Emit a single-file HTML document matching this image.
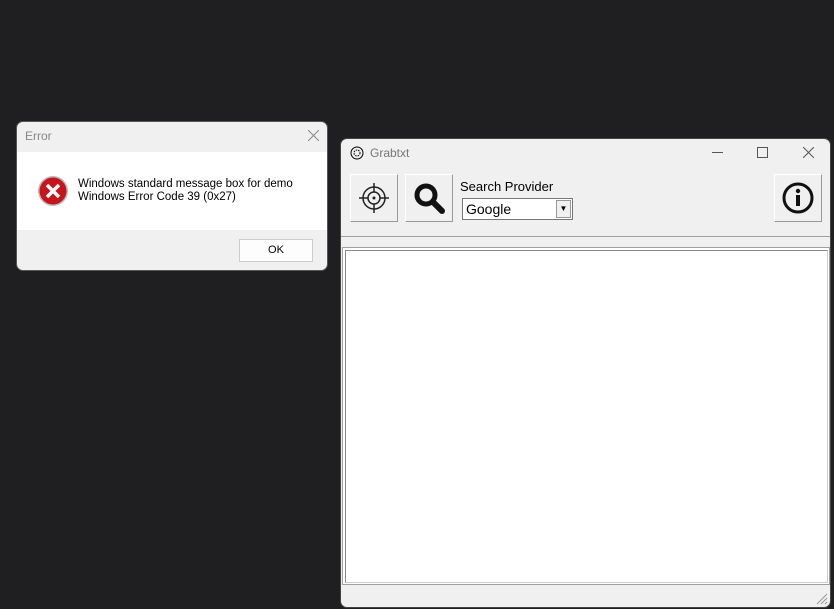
<!DOCTYPE html>
<html><head><style>
body{margin:0;width:834px;height:609px;background:#1f1f21;position:relative;overflow:hidden;font-family:"Liberation Sans",sans-serif}
.abs{position:absolute}
</style></head><body>
<!-- Error dialog -->
<div class="abs" style="left:16px;top:121px;width:312px;height:150px;background:#f0f0f0;border-radius:7px;overflow:hidden;border:1px solid #555;box-sizing:border-box">
  <div class="abs" style="left:8px;top:7px;font-size:12px;color:#888">Error</div>
  <svg class="abs" style="left:291px;top:8px" width="11" height="11"><path d="M0 0L11 11M11 0L0 11" stroke="#888" stroke-width="1"/></svg>
  <div class="abs" style="left:0;top:30px;width:312px;height:78px;background:#fff"></div>
  <svg class="abs" style="left:20px;top:53px" width="32" height="32" viewBox="0 0 32 32"><circle cx="16" cy="16" r="15" fill="#bbb"/><circle cx="16" cy="16" r="13.5" fill="#c4161c"/><path d="M10 10L22 22M22 10L10 22" stroke="#fff" stroke-width="3.5"/></svg>
  <div class="abs" style="left:61px;top:56px;font-size:11.5px;color:#000;line-height:13px">Windows standard message box for demo<br>Windows Error Code 39 (0x27)</div>
  <div class="abs" style="left:222px;top:117px;width:74px;height:23px;background:#fdfdfd;border:1px solid #ccc;box-sizing:border-box;font-size:11px;text-align:center;line-height:21px">OK</div>
</div>
<!-- Grabtxt window -->
<div class="abs" style="left:340px;top:138px;width:491px;height:470px;background:#f0f0f0;border-radius:7px;overflow:hidden;border:1px solid #444;box-sizing:border-box">
  <svg class="abs" style="left:9px;top:7px" width="14" height="14"><circle cx="7" cy="7" r="6" fill="none" stroke="#000"/><circle cx="7" cy="7" r="3" fill="none" stroke="#000" stroke-dasharray="1.5 1"/></svg>
  <div class="abs" style="left:29px;top:7px;font-size:12px;color:#777">Grabtxt</div>
  <div class="abs" style="left:371px;top:13px;width:11px;height:1px;background:#555"></div>
  <div class="abs" style="left:416px;top:8px;width:9px;height:9px;border:1px solid #555"></div>
  <svg class="abs" style="left:462px;top:8px" width="11" height="11"><path d="M0 0L11 11M11 0L0 11" stroke="#555" stroke-width="1"/></svg>
  <!-- buttons -->
  <div class="abs" style="left:9px;top:35px;width:48px;height:48px;border:1px solid #999;border-top-color:#fff;border-left-color:#fff;box-sizing:border-box;background:#f0f0f0">
    <svg width="46" height="46"><circle cx="23" cy="23" r="11" fill="none" stroke="#222" stroke-width="1.5"/><circle cx="23" cy="23" r="6" fill="none" stroke="#222" stroke-width="1.5"/><circle cx="23" cy="23" r="1.5" fill="#222"/><path d="M23 8V17M23 29V38M8 23H17M29 23H38" stroke="#222" stroke-width="1.5"/></svg>
  </div>
  <div class="abs" style="left:64px;top:35px;width:48px;height:48px;border:1px solid #999;border-top-color:#fff;border-left-color:#fff;box-sizing:border-box">
    <svg width="46" height="46"><circle cx="20" cy="20" r="9" fill="none" stroke="#111" stroke-width="5"/><path d="M27 27L36 36" stroke="#111" stroke-width="6" stroke-linecap="round"/></svg>
  </div>
  <div class="abs" style="left:119px;top:40px;font-size:13px;color:#000">Search Provider</div>
  <div class="abs" style="left:121px;top:59px;width:111px;height:22px;background:#fff;border:1px solid #777;box-sizing:border-box;font-size:14px;line-height:20px;padding-left:3px">Google
    <div class="abs" style="right:1px;top:1px;width:15px;height:18px;background:#f0f0f0;border:1px solid #999;box-sizing:border-box;font-size:8px;text-align:center;line-height:16px">▼</div>
  </div>
  <div class="abs" style="left:433px;top:35px;width:48px;height:48px;border:1px solid #999;border-top-color:#fff;border-left-color:#fff;box-sizing:border-box">
    <svg width="46" height="46"><circle cx="23" cy="23" r="14" fill="none" stroke="#111" stroke-width="3"/><circle cx="23" cy="16" r="2.2" fill="#111"/><rect x="21" y="20" width="4" height="11" fill="#111"/></svg>
  </div>
  <div class="abs" style="left:0;top:97px;width:491px;height:1px;background:#a0a0a0"></div>
  <div class="abs" style="left:1px;top:108px;width:488px;height:338px;border:1px solid #a0a0a0;box-sizing:border-box;background:#fff">
    <div class="abs" style="left:2px;top:2px;right:1px;bottom:1px;border:1px solid #ccc;border-top-color:#888;border-left-color:#888"></div>
  </div>
  <svg class="abs" style="right:2px;bottom:2px" width="12" height="12"><path d="M11 1L1 11M11 5L5 11M11 9L9 11" stroke="#999"/></svg>
</div>
</body></html>
